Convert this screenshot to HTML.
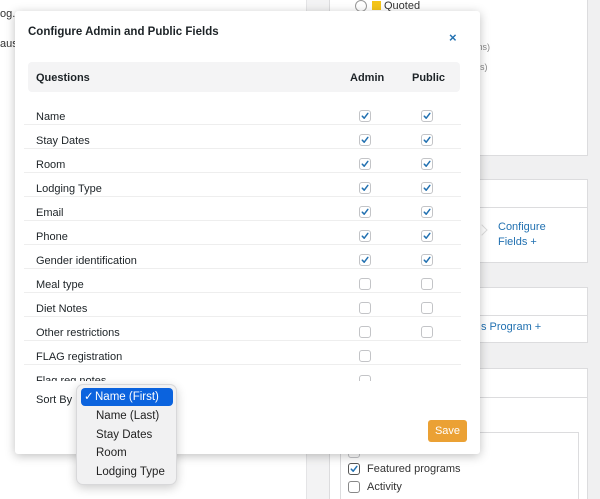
<!DOCTYPE html>
<html><head><style>
*{box-sizing:border-box;margin:0;padding:0}
html,body{width:600px;height:499px;overflow:hidden}
body{background:#fff;font-family:"Liberation Sans",Arial,sans-serif;position:relative;color:#1d2327}
.abs{position:absolute}
.cb{position:absolute;width:12px;height:12px;border:1px solid #c3c4c7;border-radius:3px;background:#fff}
.cb svg{position:absolute;left:0;top:0}
.row{position:absolute;left:24px;width:437px;height:24px;border-bottom:1px solid #eeeeee;font-size:11px}
.row span{position:absolute;left:12px;top:10px}
.panel{position:absolute;left:329px;width:259px;background:#fff;border:1px solid #dcdcde}
.dd div{position:absolute;left:19px;font-size:11.5px;color:#222}
</style></head><body>
<svg width="0" height="0" style="position:absolute"><defs><symbol id="ck" viewBox="0 0 10 10"><path d="M2.3 5.2 L4.2 7.2 L7.8 2.4" fill="none" stroke="#2271b1" stroke-width="1.5" stroke-linecap="round" stroke-linejoin="round"/></symbol></defs></svg>
<div class="abs" style="left:0;top:8px;font-size:11px;color:#333">og.</div>
<div class="abs" style="left:0;top:38px;font-size:11px;color:#333">aus</div>
<div class="abs" style="left:306px;top:0;width:294px;height:499px;background:#f0f0f1"></div>
<div class="abs" style="left:306px;top:0;width:23px;height:499px;background:#f3f3f4;border-left:1px solid #e4e4e6"></div>
<div class="panel" style="top:-1px;height:157px"></div>
<div class="abs" style="left:355px;top:0;width:12px;height:12px;border:1px solid #999;border-radius:50%;background:#fff"></div>
<div class="abs" style="left:372px;top:1px;width:9px;height:9px;background:#f5c518"></div>
<div class="abs" style="left:384px;top:0;font-size:11px;color:#333">Quoted</div>
<div class="abs" style="left:475px;top:42px;font-size:9px;color:#888">ms)</div>
<div class="abs" style="left:475px;top:62px;font-size:9px;color:#888">ns)</div>
<div class="panel" style="top:179px;height:84px"><div style="position:absolute;top:27px;left:0;right:0;border-top:1px solid #dcdcde"></div></div>
<div class="abs" style="left:498px;top:220px;font-size:11px;color:#2271b1;line-height:15px">Configure<br>Fields +</div>
<div class="abs" style="left:478px;top:226px;width:8px;height:8px;border:solid #ddd;border-width:1px 1px 0 0;transform:rotate(45deg)"></div>
<div class="panel" style="top:287px;height:56px"><div style="position:absolute;top:27px;left:0;right:0;border-top:1px solid #dcdcde"></div></div>
<div class="abs" style="left:481px;top:321px;font-size:11px;color:#2271b1">s Program +</div>
<div class="panel" style="top:368px;height:140px"><div style="position:absolute;top:28px;left:0;right:0;border-top:1px solid #dcdcde"></div></div>
<div class="abs" style="left:340px;top:432px;width:239px;height:80px;border:1px solid #dcdcde;background:#fff"></div>
<div class="cb" style="left:348px;top:446px"></div>
<div class="cb" style="left:348px;top:463px;border-color:#555"><svg width="10" height="10"><use href="#ck"/></svg></div>
<div class="abs" style="left:367px;top:463px;font-size:11px;color:#333">Featured programs</div>
<div class="cb" style="left:348px;top:481px;border-color:#888"></div>
<div class="abs" style="left:367px;top:481px;font-size:11px;color:#333">Activity</div>

<div class="abs" style="left:15px;top:11px;width:465px;height:443px;background:#fff;border-radius:3px;box-shadow:0 2px 10px rgba(0,0,0,.25)">
  <div class="abs" style="left:13px;top:15px;font-size:11.5px;font-weight:bold">Configure Admin and Public Fields</div>
  <div class="abs" style="left:434px;top:19px;font-size:13px;font-weight:bold;color:#2271b1">×</div>
  <div class="abs" style="left:13px;top:51px;width:432px;height:30px;background:#f4f4f5;border-radius:4px;font-size:11px;font-weight:bold">
    <span class="abs" style="left:8px;top:10px">Questions</span>
    <span class="abs" style="left:322px;top:10px">Admin</span>
    <span class="abs" style="left:384px;top:10px">Public</span>
  </div>
</div>
<div class="abs" style="left:0;top:0;width:480px;height:381px;overflow:hidden">
<div class="row" style="top:101px"><span>Name</span></div>
<div class="row" style="top:125px"><span>Stay Dates</span></div>
<div class="row" style="top:149px"><span>Room</span></div>
<div class="row" style="top:173px"><span>Lodging Type</span></div>
<div class="row" style="top:197px"><span>Email</span></div>
<div class="row" style="top:221px"><span>Phone</span></div>
<div class="row" style="top:245px"><span>Gender identification</span></div>
<div class="row" style="top:269px"><span>Meal type</span></div>
<div class="row" style="top:293px"><span>Diet Notes</span></div>
<div class="row" style="top:317px"><span>Other restrictions</span></div>
<div class="row" style="top:341px"><span>FLAG registration</span></div>
<div class="row" style="top:365px"><span>Flag reg notes</span></div>
<div class="cb" style="left:359px;top:110px"><svg width="10" height="10"><use href="#ck"/></svg></div><div class="cb" style="left:421px;top:110px"><svg width="10" height="10"><use href="#ck"/></svg></div>
<div class="cb" style="left:359px;top:134px"><svg width="10" height="10"><use href="#ck"/></svg></div><div class="cb" style="left:421px;top:134px"><svg width="10" height="10"><use href="#ck"/></svg></div>
<div class="cb" style="left:359px;top:158px"><svg width="10" height="10"><use href="#ck"/></svg></div><div class="cb" style="left:421px;top:158px"><svg width="10" height="10"><use href="#ck"/></svg></div>
<div class="cb" style="left:359px;top:182px"><svg width="10" height="10"><use href="#ck"/></svg></div><div class="cb" style="left:421px;top:182px"><svg width="10" height="10"><use href="#ck"/></svg></div>
<div class="cb" style="left:359px;top:206px"><svg width="10" height="10"><use href="#ck"/></svg></div><div class="cb" style="left:421px;top:206px"><svg width="10" height="10"><use href="#ck"/></svg></div>
<div class="cb" style="left:359px;top:230px"><svg width="10" height="10"><use href="#ck"/></svg></div><div class="cb" style="left:421px;top:230px"><svg width="10" height="10"><use href="#ck"/></svg></div>
<div class="cb" style="left:359px;top:254px"><svg width="10" height="10"><use href="#ck"/></svg></div><div class="cb" style="left:421px;top:254px"><svg width="10" height="10"><use href="#ck"/></svg></div>
<div class="cb" style="left:359px;top:278px"></div><div class="cb" style="left:421px;top:278px"></div>
<div class="cb" style="left:359px;top:302px"></div><div class="cb" style="left:421px;top:302px"></div>
<div class="cb" style="left:359px;top:326px"></div><div class="cb" style="left:421px;top:326px"></div>
<div class="cb" style="left:359px;top:350px"></div>
<div class="cb" style="left:359px;top:375px"></div>
</div>
<div class="abs" style="left:36px;top:394px;font-size:11px">Sort By</div>
<div class="abs" style="left:428px;top:420px;width:39px;height:22px;background:#eba134;border-radius:3px;color:#fff;font-size:11px;text-align:center;line-height:22px">Save</div>

<div class="abs dd" style="left:76px;top:384px;width:101px;height:101px;background:#f1f1f2;border:1px solid #d8d8da;border-radius:7px;box-shadow:0 3px 10px rgba(0,0,0,.2)">
  <div style="left:4px;top:3px;width:92px;height:18px;background:#0b63de;border-radius:4px;color:#fff;line-height:18px"><span style="position:absolute;left:3px">✓</span><span style="position:absolute;left:14px">Name (First)</span></div>
  <div style="top:25px">Name (Last)</div>
  <div style="top:44px">Stay Dates</div>
  <div style="top:62px">Room</div>
  <div style="top:81px">Lodging Type</div>
</div>
</body></html>
